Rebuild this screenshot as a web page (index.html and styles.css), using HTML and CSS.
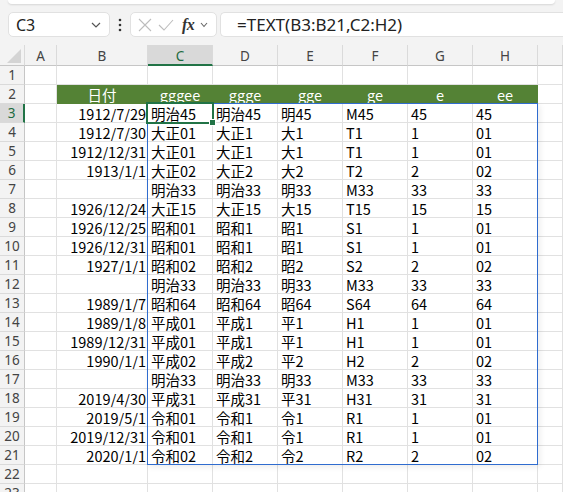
FILE: index.html
```html
<!DOCTYPE html>
<html lang="ja">
<head>
  <meta charset="UTF-8">
  <title>TEXT 和暦</title>
  <link rel="stylesheet" href="styles.css">
</head>
<body>
  <div class="ribbon-edge"></div>

  <div class="formula-bar">
    <div class="name-box">
      <span>C3</span>
      <svg width="10" height="6" viewBox="0 0 10 6"><polyline points="1,1 5,5 9,1" fill="none" stroke="#555" stroke-width="1.2"/></svg>
    </div>
    <div class="more">
      <svg width="4" height="14" viewBox="0 0 4 14"><circle cx="2" cy="2" r="1.3" fill="#333"/><circle cx="2" cy="7" r="1.3" fill="#333"/><circle cx="2" cy="12" r="1.3" fill="#333"/></svg>
    </div>
    <div class="edit-box">
      <svg width="14" height="14" viewBox="0 0 14 14"><path d="M1 1 L13 13 M13 1 L1 13" stroke="#bdbdbd" stroke-width="1.1"/></svg>
      <svg width="16" height="12" viewBox="0 0 16 12"><polyline points="1,6 6,11 15,1" fill="none" stroke="#bdbdbd" stroke-width="1.1"/></svg>
      <i class="fx">fx</i>
      <svg width="8" height="6" viewBox="0 0 8 6"><polyline points="1,1 4,4.5 7,1" fill="none" stroke="#666" stroke-width="1.1"/></svg>
    </div>
    <div class="formula">=TEXT(B3:B21,C2:H2)</div>
  </div>

  <div class="sheet">
    <div class="ch corner"><span class="tri"></span></div>
    <div class="ch">A</div><div class="ch">B</div><div class="ch on">C</div><div class="ch">D</div>
    <div class="ch">E</div><div class="ch">F</div><div class="ch">G</div><div class="ch">H</div><div class="ch"></div>

    <div class="rh">1</div><div class="c"></div><div class="c"></div><div class="c"></div><div class="c"></div><div class="c"></div><div class="c"></div><div class="c"></div><div class="c"></div><div class="c"></div>

    <div class="rh">2</div><div class="c"></div>
    <div class="c hd">日付</div><div class="c hd">gggee</div><div class="c hd">ggge</div><div class="c hd">gge</div><div class="c hd">ge</div><div class="c hd">e</div><div class="c hd">ee</div>
    <div class="c"></div>

    <div class="rh on">3</div><div class="c"></div><div class="c num">1912/7/29</div><div class="c">明治45</div><div class="c">明治45</div><div class="c">明45</div><div class="c">M45</div><div class="c">45</div><div class="c">45</div><div class="c"></div>
    <div class="rh">4</div><div class="c"></div><div class="c num">1912/7/30</div><div class="c">大正01</div><div class="c">大正1</div><div class="c">大1</div><div class="c">T1</div><div class="c">1</div><div class="c">01</div><div class="c"></div>
    <div class="rh">5</div><div class="c"></div><div class="c num">1912/12/31</div><div class="c">大正01</div><div class="c">大正1</div><div class="c">大1</div><div class="c">T1</div><div class="c">1</div><div class="c">01</div><div class="c"></div>
    <div class="rh">6</div><div class="c"></div><div class="c num">1913/1/1</div><div class="c">大正02</div><div class="c">大正2</div><div class="c">大2</div><div class="c">T2</div><div class="c">2</div><div class="c">02</div><div class="c"></div>
    <div class="rh">7</div><div class="c"></div><div class="c num"></div><div class="c">明治33</div><div class="c">明治33</div><div class="c">明33</div><div class="c">M33</div><div class="c">33</div><div class="c">33</div><div class="c"></div>
    <div class="rh">8</div><div class="c"></div><div class="c num">1926/12/24</div><div class="c">大正15</div><div class="c">大正15</div><div class="c">大15</div><div class="c">T15</div><div class="c">15</div><div class="c">15</div><div class="c"></div>
    <div class="rh">9</div><div class="c"></div><div class="c num">1926/12/25</div><div class="c">昭和01</div><div class="c">昭和1</div><div class="c">昭1</div><div class="c">S1</div><div class="c">1</div><div class="c">01</div><div class="c"></div>
    <div class="rh">10</div><div class="c"></div><div class="c num">1926/12/31</div><div class="c">昭和01</div><div class="c">昭和1</div><div class="c">昭1</div><div class="c">S1</div><div class="c">1</div><div class="c">01</div><div class="c"></div>
    <div class="rh">11</div><div class="c"></div><div class="c num">1927/1/1</div><div class="c">昭和02</div><div class="c">昭和2</div><div class="c">昭2</div><div class="c">S2</div><div class="c">2</div><div class="c">02</div><div class="c"></div>
    <div class="rh">12</div><div class="c"></div><div class="c num"></div><div class="c">明治33</div><div class="c">明治33</div><div class="c">明33</div><div class="c">M33</div><div class="c">33</div><div class="c">33</div><div class="c"></div>
    <div class="rh">13</div><div class="c"></div><div class="c num">1989/1/7</div><div class="c">昭和64</div><div class="c">昭和64</div><div class="c">昭64</div><div class="c">S64</div><div class="c">64</div><div class="c">64</div><div class="c"></div>
    <div class="rh">14</div><div class="c"></div><div class="c num">1989/1/8</div><div class="c">平成01</div><div class="c">平成1</div><div class="c">平1</div><div class="c">H1</div><div class="c">1</div><div class="c">01</div><div class="c"></div>
    <div class="rh">15</div><div class="c"></div><div class="c num">1989/12/31</div><div class="c">平成01</div><div class="c">平成1</div><div class="c">平1</div><div class="c">H1</div><div class="c">1</div><div class="c">01</div><div class="c"></div>
    <div class="rh">16</div><div class="c"></div><div class="c num">1990/1/1</div><div class="c">平成02</div><div class="c">平成2</div><div class="c">平2</div><div class="c">H2</div><div class="c">2</div><div class="c">02</div><div class="c"></div>
    <div class="rh">17</div><div class="c"></div><div class="c num"></div><div class="c">明治33</div><div class="c">明治33</div><div class="c">明33</div><div class="c">M33</div><div class="c">33</div><div class="c">33</div><div class="c"></div>
    <div class="rh">18</div><div class="c"></div><div class="c num">2019/4/30</div><div class="c">平成31</div><div class="c">平成31</div><div class="c">平31</div><div class="c">H31</div><div class="c">31</div><div class="c">31</div><div class="c"></div>
    <div class="rh">19</div><div class="c"></div><div class="c num">2019/5/1</div><div class="c">令和01</div><div class="c">令和1</div><div class="c">令1</div><div class="c">R1</div><div class="c">1</div><div class="c">01</div><div class="c"></div>
    <div class="rh">20</div><div class="c"></div><div class="c num">2019/12/31</div><div class="c">令和01</div><div class="c">令和1</div><div class="c">令1</div><div class="c">R1</div><div class="c">1</div><div class="c">01</div><div class="c"></div>
    <div class="rh">21</div><div class="c"></div><div class="c num">2020/1/1</div><div class="c">令和02</div><div class="c">令和2</div><div class="c">令2</div><div class="c">R2</div><div class="c">2</div><div class="c">02</div><div class="c"></div>
    <div class="rh">22</div><div class="c"></div><div class="c"></div><div class="c"></div><div class="c"></div><div class="c"></div><div class="c"></div><div class="c"></div><div class="c"></div><div class="c"></div>
    <div class="rh">23</div><div class="c"></div><div class="c"></div><div class="c"></div><div class="c"></div><div class="c"></div><div class="c"></div><div class="c"></div><div class="c"></div><div class="c"></div>

    <div class="spill"></div>
    <div class="active"><span class="handle"></span></div>
  </div>
</body>
</html>
```

FILE: styles.css
```css
body {
  margin: 0;
  width: 563px;
  height: 492px;
  overflow: hidden;
  background: #f3f3f3;
  font-family: "Noto Sans", "Noto Sans CJK JP", sans-serif;
}
.ribbon-edge {
  height: 4px;
  margin: 0 8px;
  background: #fff;
  border-radius: 0 0 8px 8px;
  box-shadow: 0 1px 2px rgba(0, 0, 0, 0.12);
}
.formula-bar {
  display: flex;
  align-items: center;
  height: 41px;
  padding-left: 8px;
}
.name-box, .edit-box, .formula {
  box-sizing: border-box;
  height: 25px;
  background: #fff;
  border: 1px solid #e1e1e1;
  border-radius: 5px;
  display: flex;
  align-items: center;
}
.name-box {
  width: 102px;
  justify-content: space-between;
  padding: 0 8px 0 7px;
  font-size: 16px;
  color: #222;
}
.more {
  width: 20px;
  display: flex;
  justify-content: center;
}
.edit-box {
  width: 87px;
  padding: 0 4px 0 7px;
  gap: 6px;
}
.fx {
  font-family: "Liberation Serif", serif;
  font-weight: bold;
  font-size: 16px;
  color: #333;
  margin-left: 2px;
  letter-spacing: -0.5px;
}
.formula {
  flex: 1;
  margin-left: 3px;
  border-right: none;
  border-radius: 5px 0 0 5px;
  padding-left: 16px;
  font-size: 17px;
  color: #222;
}

.sheet {
  position: relative;
  display: grid;
  grid-template-columns: 25px 32px 91px repeat(6, 65px) 1fr;
  grid-template-rows: 21px;
  grid-auto-rows: 19px;
  background: #fff;
}
.ch, .rh {
  box-sizing: border-box;
  background: #f3f3f3;
  color: #444;
  font-size: 13.5px;
  display: flex;
  align-items: center;
  justify-content: center;
}
.ch {
  border-right: 1px solid #dadada;
  border-bottom: 1px solid #c6c6c6;
  padding-top: 2px;
}
.ch.on {
  background: #d9d9d9;
  color: #1e6b41;
  border-bottom: 2px solid #217346;
}
.corner {
  position: relative;
}
.tri {
  position: absolute;
  right: 3px;
  bottom: 2px;
  width: 14px;
  height: 14px;
  background: #d4d4d4;
  clip-path: polygon(100% 0, 100% 100%, 0 100%);
}
.rh {
  border-right: 1px solid #c6c6c6;
  border-bottom: 1px solid #dadada;
}
.rh.on {
  background: #d9d9d9;
  color: #1e6b41;
  border-right: 2px solid #217346;
}
.c {
  box-sizing: border-box;
  border-right: 1px solid #e1e1e1;
  border-bottom: 1px solid #e1e1e1;
  padding: 0 3px;
  font-family: "Noto Sans CJK JP", sans-serif;
  font-size: 14.5px;
  line-height: 19px;
  color: #000;
  white-space: nowrap;
  overflow: hidden;
}
.c.num {
  text-align: right;
  padding: 0 1px;
}
.c.hd {
  background: #548235;
  border-color: #548235;
  color: #fff;
  text-align: center;
}

.spill {
  position: absolute;
  left: 147px;
  top: 58px;
  width: 391px;
  height: 362px;
  box-sizing: border-box;
  border: 1px solid #2f6ccf;
  box-shadow: 2px 2px 6px rgba(0, 0, 0, 0.08);
  pointer-events: none;
}
.active {
  position: absolute;
  left: 146px;
  top: 57px;
  width: 68px;
  height: 22px;
  box-sizing: border-box;
  border: 2px solid #217346;
  pointer-events: none;
}
.handle {
  position: absolute;
  right: -4px;
  bottom: -4px;
  width: 5px;
  height: 5px;
  background: #217346;
  border: 1px solid #fff;
}
```
